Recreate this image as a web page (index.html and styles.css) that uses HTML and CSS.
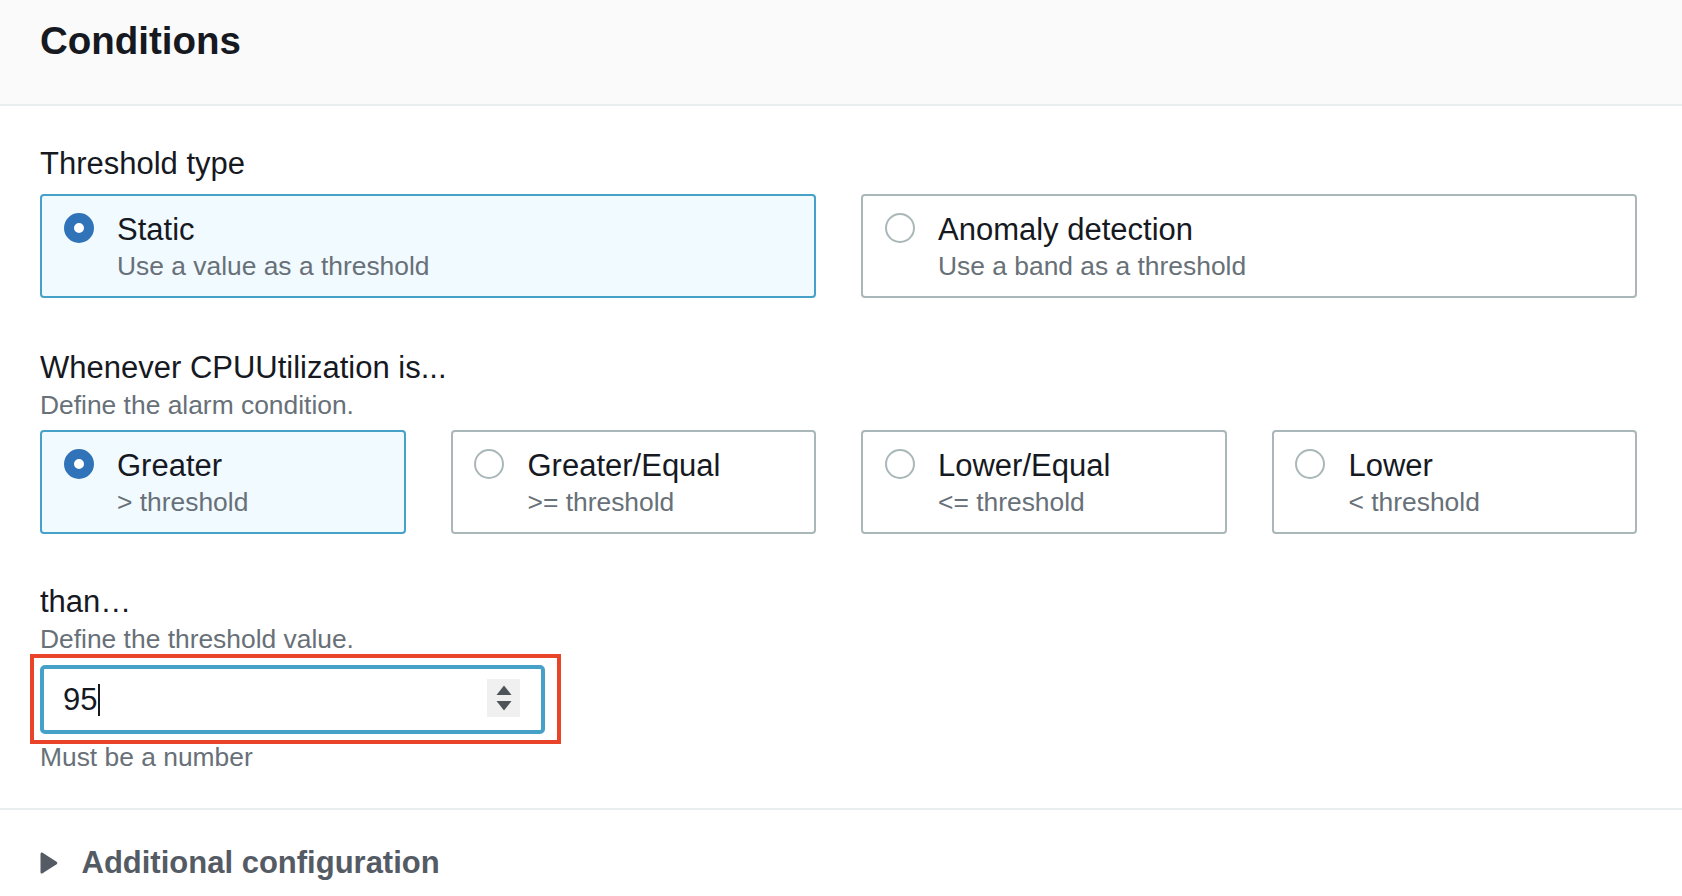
FILE: index.html
```html
<!DOCTYPE html>
<html lang="en">
<head>
<meta charset="utf-8">
<title>Conditions</title>
<link rel="stylesheet" href="styles.css">
</head>
<body>
<div class="panel">
  <div class="panel-header">
    <h2 class="panel-title">Conditions</h2>
  </div>
  <div class="panel-body">
    <div class="field field-threshold-type">
      <div class="field-label">Threshold type</div>
      <div class="tiles tiles-2">
        <div class="tile tile-selected">
          <span class="radio radio-checked"></span>
          <div class="tile-text">
            <div class="tile-title">Static</div>
            <div class="tile-desc">Use a value as a threshold</div>
          </div>
        </div>
        <div class="tile">
          <span class="radio"></span>
          <div class="tile-text">
            <div class="tile-title">Anomaly detection</div>
            <div class="tile-desc">Use a band as a threshold</div>
          </div>
        </div>
      </div>
    </div>

    <div class="field field-condition">
      <div class="field-label">Whenever CPUUtilization is...</div>
      <div class="field-desc">Define the alarm condition.</div>
      <div class="tiles tiles-4">
        <div class="tile tile-selected">
          <span class="radio radio-checked"></span>
          <div class="tile-text">
            <div class="tile-title">Greater</div>
            <div class="tile-desc">&gt; threshold</div>
          </div>
        </div>
        <div class="tile">
          <span class="radio"></span>
          <div class="tile-text">
            <div class="tile-title">Greater/Equal</div>
            <div class="tile-desc">&gt;= threshold</div>
          </div>
        </div>
        <div class="tile">
          <span class="radio"></span>
          <div class="tile-text">
            <div class="tile-title">Lower/Equal</div>
            <div class="tile-desc">&lt;= threshold</div>
          </div>
        </div>
        <div class="tile">
          <span class="radio"></span>
          <div class="tile-text">
            <div class="tile-title">Lower</div>
            <div class="tile-desc">&lt; threshold</div>
          </div>
        </div>
      </div>
    </div>

    <div class="field field-value">
      <div class="field-label">than…</div>
      <div class="field-desc">Define the threshold value.</div>
      <div class="input-wrap">
        <div class="input">
          <span class="input-value">95</span><span class="caret"></span>
          <span class="spinner">
            <svg width="16" height="28" viewBox="0 0 16 28" aria-hidden="true">
              <path d="M8 1.5 L15.5 11 L0.5 11 Z" fill="#4f5459"/>
              <path d="M0.5 17 L15.5 17 L8 26.5 Z" fill="#4f5459"/>
            </svg>
          </span>
        </div>
        <div class="annotation"></div>
      </div>
      <div class="field-constraint">Must be a number</div>
    </div>
  </div>
  <div class="expander">
    <svg class="expander-icon" width="18" height="22" viewBox="0 0 18 22" aria-hidden="true">
      <path d="M2.2 0.6 Q0.5 -0.2 0.5 2 L0.5 20 Q0.5 22.2 2.2 21.4 L16.6 12.3 Q18 11 16.6 9.7 Z" fill="#545b64"/>
    </svg>
    <span class="expander-title">Additional configuration</span>
  </div>
</div>
</body>
</html>
```

FILE: styles.css
```css
* {
  box-sizing: border-box;
}

html, body {
  margin: 0;
  padding: 0;
  background: #ffffff;
}

body {
  font-family: "Liberation Sans", Arial, sans-serif;
  color: #16191f;
  width: 1682px;
  height: 896px;
  overflow: hidden;
}

.panel-header {
  height: 106px;
  background: #fafafa;
  border-bottom: 2px solid #eaeded;
  padding: 17px 40px 0 40px;
}

.panel-title {
  margin: 0;
  font-size: 38.5px;
  line-height: 48px;
  font-weight: 700;
  color: #16191f;
}

.panel-body {
  padding: 38px 45px 34px 40px;
  border-bottom: 2px solid #eaeded;
}

.field-label {
  font-size: 31px;
  line-height: 40px;
  color: #16191f;
}

.field-desc,
.field-constraint {
  font-size: 26.4px;
  line-height: 33px;
  color: #687078;
}

.field-desc {
  margin-top: 1px;
}

.field-condition {
  margin-top: 50px;
}

.field-value {
  margin-top: 48px;
}

.tiles {
  display: grid;
  gap: 45px;
  margin-top: 10px;
}

.tiles-2 {
  grid-template-columns: repeat(2, 1fr);
}

.tiles-4 {
  grid-template-columns: repeat(4, 1fr);
  margin-top: 8px;
}

.tile {
  display: flex;
  align-items: flex-start;
  height: 104px;
  border: 2px solid #aab7b8;
  border-radius: 4px;
  background: #ffffff;
  padding: 13.5px 20px 12px 21.5px;
}

.tile-selected {
  border-color: #46a1c8;
  background: #f1faff;
}

.radio {
  flex: none;
  width: 30px;
  height: 30px;
  margin-top: 3.5px;
  border-radius: 50%;
  border: 2px solid #aab7b8;
  background: #ffffff;
}

.radio-checked {
  border: 10px solid #3073b8;
}

.tile-text {
  margin-left: 23.5px;
}

.tile-title {
  font-size: 31px;
  line-height: 40px;
  color: #16191f;
}

.tile-desc {
  font-size: 26.4px;
  line-height: 33px;
  color: #687078;
}

.input-wrap {
  position: relative;
  width: 505px;
  margin-top: 9px;
}

.input {
  display: flex;
  align-items: center;
  height: 69px;
  border: 4px solid #46a1c8;
  border-radius: 5px;
  background: #ffffff;
  padding: 0 21px 0 19px;
  font-size: 31px;
  line-height: 61px;
  color: #16191f;
}

.input-value {
  display: block;
}

.caret {
  display: block;
  width: 2px;
  height: 32px;
  margin-left: 1px;
  background: #16191f;
}

.spinner {
  margin-left: auto;
  display: flex;
  align-items: center;
  justify-content: center;
  width: 33px;
  height: 38px;
  margin-top: -3px;
  background: #f0f0f0;
}

.spinner svg {
  display: block;
}

.annotation {
  position: absolute;
  left: -10px;
  right: -16px;
  top: -11px;
  bottom: -10px;
  border: 4px solid #e9432a;
  pointer-events: none;
}

.field-constraint {
  margin-top: 7px;
}

.expander {
  display: flex;
  align-items: center;
  padding: 33px 40px 0 40px;
}

.expander-icon {
  display: block;
  flex: none;
}

.expander-title {
  margin-left: 23.5px;
  font-size: 31px;
  line-height: 40px;
  font-weight: 700;
  color: #545b64;
}
```
